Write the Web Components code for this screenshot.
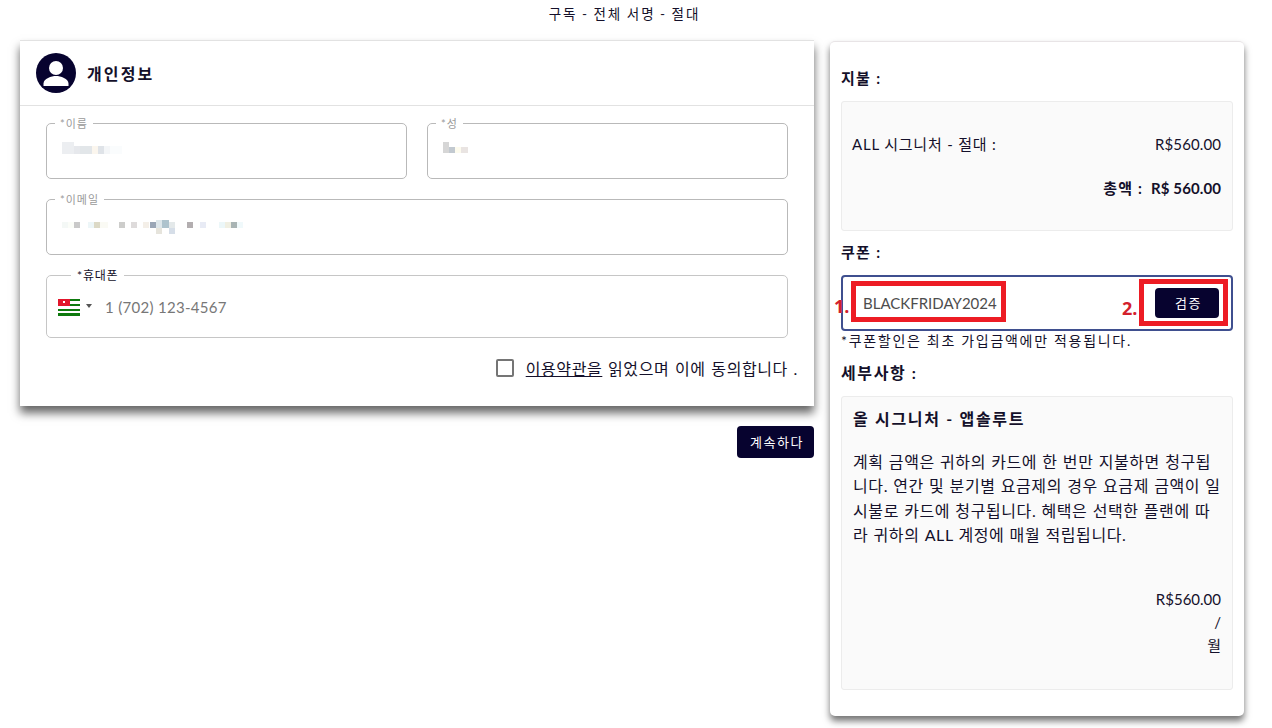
<!DOCTYPE html>
<html lang="ko">
<head>
<meta charset="utf-8">
<title>구독</title>
<style>
    html, body { margin: 0; background: #fff; }
    body { font: 15px "Lato", "Noto Sans CJK KR", sans-serif; color: #14102a; }
</style>
</head>
<body>
<checkout-page>
    <info-card slot="left" heading="개인정보">
        <div style="display:grid;grid-template-columns:361px 361px;column-gap:20px;row-gap:14px">
            <outline-field label="*이름" mask="first" height="62"></outline-field>
            <outline-field label="*성" mask="last" height="62"></outline-field>
            <outline-field label="*이메일" mask="email" height="62" style="grid-column:1 / 3"></outline-field>
            <phone-field style="grid-column:1 / 3"></phone-field>
        </div>
        <terms-row></terms-row>
    </info-card>
    <dark-button slot="left" class="next" wide="77" high="32">계속하다</dark-button>
    <order-card slot="right"></order-card>
</checkout-page>

<script>
class CheckoutPage extends HTMLElement {
    constructor() {
        super();
        this.attachShadow({mode: 'open'}).innerHTML = `
            <style>
                :host { display: block; width: 1272px; height: 728px; overflow: hidden; }
                h1 { margin: 0; height: 40px; padding: 6px 23px 0 0; box-sizing: border-box; text-align: center;
                     font-size: 13.500px; line-height: 17px; font-weight: 400; letter-spacing: 2px; word-spacing: -1px; }
                .cols { display: flex; gap: 16px; padding-left: 20px; align-items: flex-start; }
                .left { width: 794px; display: flex; flex-direction: column; align-items: flex-end; gap: 20px; }
                .right { width: 414px; margin-top: 1px; }
            </style>
            <h1>구독 - 전체 서명 - 절대</h1>
            <div class="cols">
                <div class="left"><slot name="left"></slot></div>
                <div class="right"><slot name="right"></slot></div>
            </div>`;
    }
}
customElements.define('checkout-page', CheckoutPage);

class InfoCard extends HTMLElement {
    connectedCallback() {
        const shadow = this.attachShadow({mode: 'open'});
        shadow.innerHTML = `
            <style>
                :host { display: block; width: 794px; height: 366px; box-sizing: border-box; background: #fff;
                        border-top: 1px solid #e2e2e2; box-shadow: 0 7px 9px rgba(0,0,0,.6); }
                header { height: 64px; display: flex; align-items: center; gap: 11px; padding-left: 16px;
                         border-bottom: 1px solid #e2e2e2; }
                svg { width: 40px; height: 40px; display: block; }
                h2 { margin: 0; font-size: 16px; font-weight: 700; letter-spacing: 2.100px; }
                .body { padding: 11px 26px 0; }
            </style>
            <header>
                <svg viewBox="0 0 40 40">
                    <circle cx="20" cy="20" r="20" fill="#07032f"/>
                    <circle cx="20" cy="15" r="7" fill="#fff"/>
                    <path d="M7.500 33 v-2.500 c0-5 8-7.500 12.500-7.500 s12.500 2.500 12.500 7.500 v2.500 z" fill="#fff"/>
                </svg>
                <h2>${this.getAttribute('heading')}</h2>
            </header>
            <div class="body"><slot></slot></div>`;
    }
}
customElements.define('info-card', InfoCard);

// pixelated blocks over the personal data of the reference
const MASKS = {
    first: {w: 60, h: 12, y: 0, c: [[0,0,12,12,'#eceef1'],[12,4,6,8,'#e6e8ec'],[18,4,12,8,'#e2e6e9'],[30,4,6,8,'#fbf6ee'],[36,4,6,8,'#dfe3e8'],[42,4,6,8,'#f4f6f8'],[48,4,12,8,'#fafcfd']]},
    last: {w: 26, h: 12, y: 0, c: [[0,0,6,11,'#d6d6d6'],[6,5,6,6,'#c2c9d0'],[12,5,6,6,'#fdfbee'],[18,5,7,6,'#e9e4e2']]},
    email: {w: 184, h: 18, y: 4, c: [[0,0,6,6,'#f4f8f6'],[6,0,6,6,'#fbfdf8'],[12,0,6,6,'#c9c9c9'],[26,0,6,6,'#edf6f8'],[32,0,6,6,'#dcd9c6'],[38,0,8,6,'#fafaf4'],[57,0,6,6,'#cdcdcb'],[69,0,6,6,'#dedbdb'],[81,0,6,6,'#f4efe8'],[88,0,6,6,'#9aa6b6'],[94,-2,6,8,'#dde6ea'],[100,-2,7,8,'#aec3cd'],[107,0,6,6,'#e4e9ea'],[94,6,6,6,'#e6e4dc'],[107,6,6,6,'#d6dee8'],[125,0,6,6,'#b3aeb0'],[138,0,6,6,'#e8ebf5'],[157,0,6,6,'#ecf7f9'],[163,0,6,6,'#f0efe2'],[169,0,6,6,'#a9b4b4'],[175,0,6,6,'#f0f9fb']]}
};

class OutlineField extends HTMLElement {
    connectedCallback() {
        const m = MASKS[this.getAttribute('mask')];
        const cells = m.c.map(c => `<rect x="${c[0]}" y="${c[1] + 2}" width="${c[2]}" height="${c[3]}" fill="${c[4]}"/>`).join('');
        this.attachShadow({mode: 'open'}).innerHTML = `
            <style>
                :host { display: block; }
                fieldset { margin: 0; box-sizing: border-box; height: ${this.getAttribute('height')}px;
                           border: 1px solid #b9b9b9; border-radius: 5px; padding: ${10 + m.y}px 15px 0; }
                legend { margin-left: -7px; padding: 0 5px; font-size: 11px; line-height: 13px; color: #9a9a9a; letter-spacing: 1px; }
                svg { display: block; overflow: visible; shape-rendering: crispEdges; }
            </style>
            <fieldset>
                <legend>${this.getAttribute('label')}</legend>
                <svg width="${m.w}" height="${m.h + 2}">${cells}</svg>
            </fieldset>`;
    }
}
customElements.define('outline-field', OutlineField);

class PhoneField extends HTMLElement {
    constructor() {
        super();
        this.attachShadow({mode: 'open'}).innerHTML = `
            <style>
                :host { display: block; }
                fieldset { margin: 0; box-sizing: border-box; height: 69px; border: 1px solid #c6c6c6; border-radius: 5px;
                           padding: 9px 11px 0; display: flex; }
                legend { margin-left: 13px; padding: 0 6px; font-size: 12px; line-height: 13px; color: #14102a; letter-spacing: .8px; }
                .row { display: flex; align-items: center; height: 32px; }
                svg { display: block; }
                .caret { width: 0; height: 0; margin: 0 13px 2px 6px; border: 3px solid transparent; border-top: 4px solid #555; border-bottom: 0; }
                .num { font-size: 15px; color: #777; letter-spacing: .3px; }
            </style>
            <fieldset>
                <legend>*휴대폰</legend>
                <div class="row">
                    <svg width="22" height="17" viewBox="0 0 22 17" shape-rendering="crispEdges">
                        <rect width="22" height="17" fill="#fff"/>
                        <rect width="22" height="2" y="0" fill="#0e7a0e"/>
                        <rect width="22" height="2" y="5" fill="#0e7a0e"/>
                        <rect width="22" height="2" y="10" fill="#0e7a0e"/>
                        <rect width="22" height="3" y="14" fill="#0e7a0e"/>
                        <rect width="12" height="7" fill="#e2162c"/>
                        <circle cx="6" cy="3" r="1.500" fill="#fff"/>
                    </svg>
                    <span class="caret"></span>
                    <span class="num">1 (702) 123-4567</span>
                </div>
            </fieldset>`;
    }
}
customElements.define('phone-field', PhoneField);

class TermsRow extends HTMLElement {
    constructor() {
        super();
        this.attachShadow({mode: 'open'}).innerHTML = `
            <style>
                :host { display: flex; justify-content: flex-end; align-items: center; gap: 12px; height: 22px;
                        margin: 19px -10px 0 0; font-size: 16px; letter-spacing: .6px; word-spacing: 1px; }
                i { width: 14px; height: 14px; border: 2px solid #757575; border-radius: 2px; display: block; }
                a { color: inherit; text-decoration: underline; }
            </style>
            <i></i><span><a>이용약관을</a> 읽었으며 이에 동의합니다 .</span>`;
    }
}
customElements.define('terms-row', TermsRow);

class DarkButton extends HTMLElement {
    connectedCallback() {
        this.attachShadow({mode: 'open'}).innerHTML = `
            <style>
                :host { display: inline-flex; align-items: center; justify-content: center; box-sizing: border-box;
                        width: ${this.getAttribute('wide')}px; height: ${this.getAttribute('high')}px; padding: 0 0 1px 3px;
                        background: #07032f; color: #fff; border-radius: 4px; font-size: 13px; letter-spacing: 1.500px; }
            </style>
            <slot></slot>`;
    }
}
customElements.define('dark-button', DarkButton);

class PanelBox extends HTMLElement {
    connectedCallback() {
        this.attachShadow({mode: 'open'}).innerHTML = `
            <style>
                :host { display: block; box-sizing: border-box; height: ${this.getAttribute('high')}px; background: #fafafa;
                        border: 1px solid #ececec; border-radius: 3px; padding: 0 11px 0 10px; }
            </style>
            <slot></slot>`;
    }
}
customElements.define('panel-box', PanelBox);

class OrderCard extends HTMLElement {
    constructor() {
        super();
        this.attachShadow({mode: 'open'}).innerHTML = `
            <style>
                :host { display: block; box-sizing: border-box; height: 675px; background: #fff; padding: 0 11px;
                        border-radius: 5px; border-top: 1px solid #e8e4e6;
                        box-shadow: 0 5px 7px rgba(0,0,0,.55); }
                h3 { margin: 0; font-size: 15px; line-height: 20px; font-weight: 700; letter-spacing: 1.300px; }
                .h-pay { padding: 26px 0 13px; }
                .h-coupon { padding: 11px 0 13px; }
                .h-detail { padding: 12px 0 13px; font-size: 16px; letter-spacing: 1.600px; }
                .line { display: flex; justify-content: space-between; line-height: 20px; }
                .line span:first-child { letter-spacing: .8px; }
                .line span:last-child { letter-spacing: .1px; }
                .pay1 { margin-top: 32px; }
                .total { margin-top: 24px; justify-content: flex-end; gap: 8px; font-weight: 700; }
                .total span:first-child { letter-spacing: 1.200px; }
                .coupon { position: relative; box-sizing: border-box; height: 56px; border: 2px solid #3f4f8f; border-radius: 4px;
                          display: flex; justify-content: space-between; align-items: center; padding: 0 12px 0 20px; }
                .code { color: #4d4d4d; font-size: 15px; }
                .mark { position: absolute; border: 5px solid #ed1c24; box-sizing: border-box; }
                .m1 { left: 8px; top: 4px; width: 155px; height: 41px; }
                .m2 { left: 296px; top: 2px; width: 89px; height: 47px; }
                .num { position: absolute; color: #d3202c; font-weight: 700; font-size: 18px; line-height: 20px; font-family: "Open Sans", sans-serif; }
                .n1 { left: -9px; top: 19px; }
                .n2 { left: 279px; top: 21px; }
                .note { font-size: 14px; line-height: 20px; letter-spacing: 1.700px; }
                .title { font-weight: 700; font-size: 16px; line-height: 20px; margin: 12px 0 0 1px; letter-spacing: 1.700px; }
                p { margin: 21px 0 0 1px; font-size: 16px; line-height: 24.300px; letter-spacing: .600px; word-spacing: .5px; white-space: nowrap; }
                .bottom { margin-top: 41px; text-align: right; line-height: 23px; }
            </style>
            <h3 class="h-pay">지불 :</h3>
            <panel-box high="130">
                <div class="line pay1"><span>ALL 시그니처 - 절대 :</span><span>R$560.00</span></div>
                <div class="line total"><span>총액 :</span><span>R$ 560.00</span></div>
            </panel-box>
            <h3 class="h-coupon">쿠폰 :</h3>
            <div class="coupon">
                <span class="code">BLACKFRIDAY2024</span>
                <dark-button wide="64" high="30">검증</dark-button>
                <span class="mark m1"></span>
                <span class="mark m2"></span>
                <span class="num n1">1.</span>
                <span class="num n2">2.</span>
            </div>
            <div class="note">*쿠폰할인은 최초 가입금액에만 적용됩니다.</div>
            <h3 class="h-detail">세부사항 :</h3>
            <panel-box high="294">
                <div class="title">올 시그니처 - 앱솔루트</div>
                <p>계획 금액은 귀하의 카드에 한 번만 지불하면 청구됩<br>니다. 연간 및 분기별 요금제의 경우 요금제 금액이 일<br>시불로 카드에 청구됩니다. 혜택은 선택한 플랜에 따<br>라 귀하의 ALL 계정에 매월 적립됩니다.</p>
                <div class="bottom">R$560.00<br>/<br>월</div>
            </panel-box>`;
    }
}
customElements.define('order-card', OrderCard);
</script>
</body>
</html>
